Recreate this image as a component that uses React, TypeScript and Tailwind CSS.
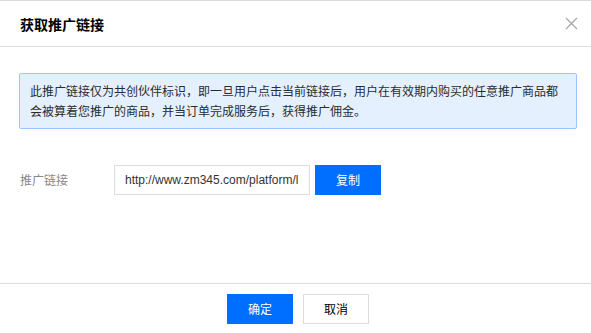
const cjk = "font-['Noto_Sans_CJK_SC','Liberation_Sans',sans-serif]";

function CloseIcon() {
  return (
    <svg width="13" height="13" viewBox="0 0 13 13" className="text-[#a6a6a6]">
      <path d="M1 1L12 12M12 1L1 12" stroke="currentColor" strokeWidth="1.2" fill="none" />
    </svg>
  );
}

export default function App() {
  return (
    <div className={`w-[591px] h-[333px] bg-white flex flex-col border-t border-[#dcdcdc] text-[#333] ${cjk}`}>
      {/* Header */}
      <div className="h-[46px] flex items-center justify-between pl-5 pr-[13px] border-b border-[#dcdcdc]">
        <h2 className="text-[14px] font-bold text-black leading-none">获取推广链接</h2>
        <CloseIcon />
      </div>

      {/* Body */}
      <div className="flex-1 px-[19px] pt-[26px]">
        <div className="border border-[#9ac6ff] bg-[#e5f0ff] rounded-[2px] px-[10px] py-[7px] text-[12px] leading-[20px] text-[#2b2b2b] mr-[-5px]">
          此推广链接仅为共创伙伴标识，即一旦用户点击当前链接后，用户在有效期内购买的任意推广商品都会被算着您推广的商品，并当订单完成服务后，获得推广佣金。
        </div>

        <div className="flex items-center mt-[36px]">
          <label className="w-[95px] pl-px text-[12px] text-[#888]">推广链接</label>
          <div className="w-[196px] h-[30px] border border-[#dcdcdc] flex items-center pl-[10px] overflow-hidden whitespace-nowrap">
            <span className="font-['Liberation_Sans',sans-serif] text-[12px] text-[#333]">http://www.zm345.com/platform/l</span>
          </div>
          <button className="ml-[5px] w-[66px] h-[30px] bg-[#006eff] text-white text-[12px]">复制</button>
        </div>
      </div>

      {/* Footer */}
      <div className="h-[50px] border-t border-[#dcdcdc] flex items-center justify-center gap-[10px] pl-[5px]">
        <button className="w-[66px] h-[30px] bg-[#006eff] text-white text-[12px]">确定</button>
        <button className="w-[66px] h-[30px] bg-white border border-[#dcdcdc] text-black text-[12px]">取消</button>
      </div>
    </div>
  );
}
